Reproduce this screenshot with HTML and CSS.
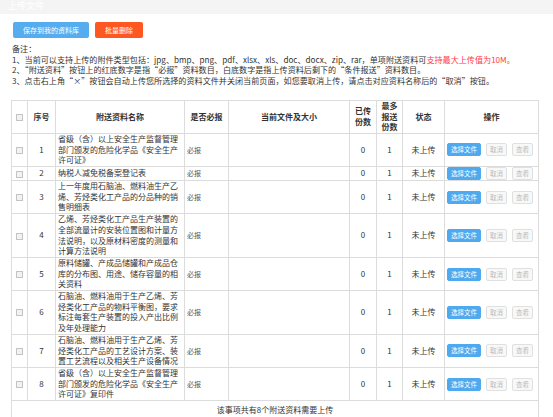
FILE: index.html
```html
<!DOCTYPE html>
<html lang="zh-CN">
<head>
<meta charset="utf-8">
<title>上传文件</title>
<link rel="stylesheet" href="styles.css">
</head>
<body>
<div class="titlebar">上传文件</div>
<div class="content">
  <div class="toolbar">
    <button class="btn btn-blue">保存到我的资料库</button>
    <button class="btn btn-orange">批量删除</button>
  </div>
  <div class="notes">
    <div>备注：</div>
    <div>1、当前可以支持上传的附件类型包括：jpg、bmp、png、pdf、xlsx、xls、doc、docx、zip、rar，单项附送资料可<span class="red">支持最大上传值为10M。</span></div>
    <div>2、“附送资料”按钮上的红底数字是指“必报”资料数目，白底数字是指上传资料后剩下的“条件报送”资料数目。</div>
    <div>3、点击右上角“×”按钮会自动上传您所选择的资料文件并关闭当前页面，如您要取消上传，请点击对应资料名称后的“取消”按钮。</div>
  </div>
  <table class="grid">
    <colgroup>
      <col class="c-chk"><col class="c-no"><col class="c-name"><col class="c-req"><col class="c-file"><col class="c-up"><col class="c-max"><col class="c-st"><col class="c-op">
    </colgroup>
    <thead>
      <tr>
        <th><span class="chk"></span></th>
        <th>序号</th>
        <th>附送资料名称</th>
        <th>是否必报</th>
        <th>当前文件及大小</th>
        <th>已传<br>份数</th>
        <th>最多<br>报送<br>份数</th>
        <th>状态</th>
        <th>操作</th>
      </tr>
    </thead>
    <tbody>
      <tr>
        <td class="ctr"><span class="chk"></span></td><td class="ctr">1</td>
        <td class="name">省级（含）以上安全生产监督管理部门颁发的危险化学品《安全生产许可证》</td>
        <td class="req">必报</td><td></td><td class="ctr">0</td><td class="ctr">1</td><td class="ctr">未上传</td>
        <td class="ops"><span class="ob ob-blue">选择文件</span><span class="ob">取消</span><span class="ob">查看</span></td>
      </tr>
      <tr>
        <td class="ctr"><span class="chk"></span></td><td class="ctr">2</td>
        <td class="name">纳税人减免税备案登记表</td>
        <td class="req">必报</td><td></td><td class="ctr">0</td><td class="ctr">1</td><td class="ctr">未上传</td>
        <td class="ops"><span class="ob ob-blue">选择文件</span><span class="ob">取消</span><span class="ob">查看</span></td>
      </tr>
      <tr>
        <td class="ctr"><span class="chk"></span></td><td class="ctr">3</td>
        <td class="name">上一年度用石脑油、燃料油生产乙烯、芳烃类化工产品的分品种的销售明细表</td>
        <td class="req">必报</td><td></td><td class="ctr">0</td><td class="ctr">1</td><td class="ctr">未上传</td>
        <td class="ops"><span class="ob ob-blue">选择文件</span><span class="ob">取消</span><span class="ob">查看</span></td>
      </tr>
      <tr>
        <td class="ctr"><span class="chk"></span></td><td class="ctr">4</td>
        <td class="name">乙烯、芳烃类化工产品生产装置的全部流量计的安装位置图和计量方法说明，以及原材料密度的测量和计算方法说明</td>
        <td class="req">必报</td><td></td><td class="ctr">0</td><td class="ctr">1</td><td class="ctr">未上传</td>
        <td class="ops"><span class="ob ob-blue">选择文件</span><span class="ob">取消</span><span class="ob">查看</span></td>
      </tr>
      <tr>
        <td class="ctr"><span class="chk"></span></td><td class="ctr">5</td>
        <td class="name">原料储罐、产成品储罐和产成品仓库的分布图、用途、储存容量的相关资料</td>
        <td class="req">必报</td><td></td><td class="ctr">0</td><td class="ctr">1</td><td class="ctr">未上传</td>
        <td class="ops"><span class="ob ob-blue">选择文件</span><span class="ob">取消</span><span class="ob">查看</span></td>
      </tr>
      <tr>
        <td class="ctr"><span class="chk"></span></td><td class="ctr">6</td>
        <td class="name">石脑油、燃料油用于生产乙烯、芳烃类化工产品的物料平衡图，要求标注每套生产装置的投入产出比例及年处理能力</td>
        <td class="req">必报</td><td></td><td class="ctr">0</td><td class="ctr">1</td><td class="ctr">未上传</td>
        <td class="ops"><span class="ob ob-blue">选择文件</span><span class="ob">取消</span><span class="ob">查看</span></td>
      </tr>
      <tr>
        <td class="ctr"><span class="chk"></span></td><td class="ctr">7</td>
        <td class="name">石脑油、燃料油用于生产乙烯、芳烃类化工产品的工艺设计方案、装置工艺流程以及相关生产设备情况</td>
        <td class="req">必报</td><td></td><td class="ctr">0</td><td class="ctr">1</td><td class="ctr">未上传</td>
        <td class="ops"><span class="ob ob-blue">选择文件</span><span class="ob">取消</span><span class="ob">查看</span></td>
      </tr>
      <tr>
        <td class="ctr"><span class="chk"></span></td><td class="ctr">8</td>
        <td class="name">省级（含）以上安全生产监督管理部门颁发的危险化学品《安全生产许可证》复印件</td>
        <td class="req">必报</td><td></td><td class="ctr">0</td><td class="ctr">1</td><td class="ctr">未上传</td>
        <td class="ops"><span class="ob ob-blue">选择文件</span><span class="ob">取消</span><span class="ob">查看</span></td>
      </tr>
      <tr>
        <td class="foot" colspan="9">该事项共有8个附送资料需要上传</td>
      </tr>
    </tbody>
  </table>
</div>
</body>
</html>
```

FILE: styles.css
```css
* { box-sizing: border-box; }
html, body {
  margin: 0;
  padding: 0;
  background: #fff;
  font-family: "Noto Sans CJK SC", "Noto Sans", sans-serif;
  color: #333;
}
.titlebar {
  height: 14px;
  background: #f4f4f4;
  color: #fff;
  font-size: 9px;
  line-height: 11px;
  padding-left: 8px;
  overflow: hidden;
}
.content {
  padding-left: 11px;
}
.toolbar {
  display: flex;
  gap: 6px;
  padding: 8px 0 0 2px;
}
.btn {
  height: 16px;
  border: 0;
  border-radius: 2px;
  color: #fff;
  font-family: inherit;
  font-size: 7px;
  line-height: 16px;
  padding: 0;
}
.btn-blue { width: 76px; background: #55acee; }
.btn-orange { width: 48px; background: #ff5722; }
.notes {
  margin-top: 6px;
  padding-left: 1px;
  font-size: 8.1px;
  line-height: 10.7px;
  white-space: nowrap;
}
.red { color: #ff3b3b; }
.grid {
  margin-top: 13px;
  width: 527px;
  table-layout: fixed;
  border-collapse: collapse;
  font-size: 8px;
  line-height: 10.7px;
}
.c-chk { width: 16px; }
.c-no { width: 28px; }
.c-name { width: 129px; }
.c-req { width: 44px; }
.c-file { width: 121px; }
.c-up { width: 27px; }
.c-max { width: 26px; }
.c-st { width: 42px; }
.c-op { width: 94px; }
.grid th, .grid td {
  border: 1px solid #dcdcdc;
  padding: 0 2px;
  vertical-align: middle;
}
.grid th {
  font-weight: bold;
  text-align: center;
  height: 33px;
  color: #333;
}
.ctr { text-align: center; }
.name { text-align: left; }
.req { font-size: 7px; color: #555; padding-left: 3px; }
.chk {
  display: inline-block;
  width: 7px;
  height: 7px;
  border: 1px solid #c4c4c4;
  background: #f2f2f2;
  vertical-align: middle;
}
.ops {
  padding: 1px 0 1px 3px;
  white-space: nowrap;
}
.ob {
  display: inline-block;
  vertical-align: middle;
  width: 21px;
  height: 13px;
  margin-left: 5px;
  border: 1px solid #e0e0e0;
  border-radius: 2px;
  background: #f8f8f8;
  color: #bcbcbc;
  font-size: 6.5px;
  line-height: 11px;
  text-align: center;
}
.ob-blue {
  width: 34px;
  margin-left: 0;
  border-color: #4fa9ee;
  background: #4fa9ee;
  color: #fff;
}
.foot {
  height: 20px;
  text-align: center;
}
```
